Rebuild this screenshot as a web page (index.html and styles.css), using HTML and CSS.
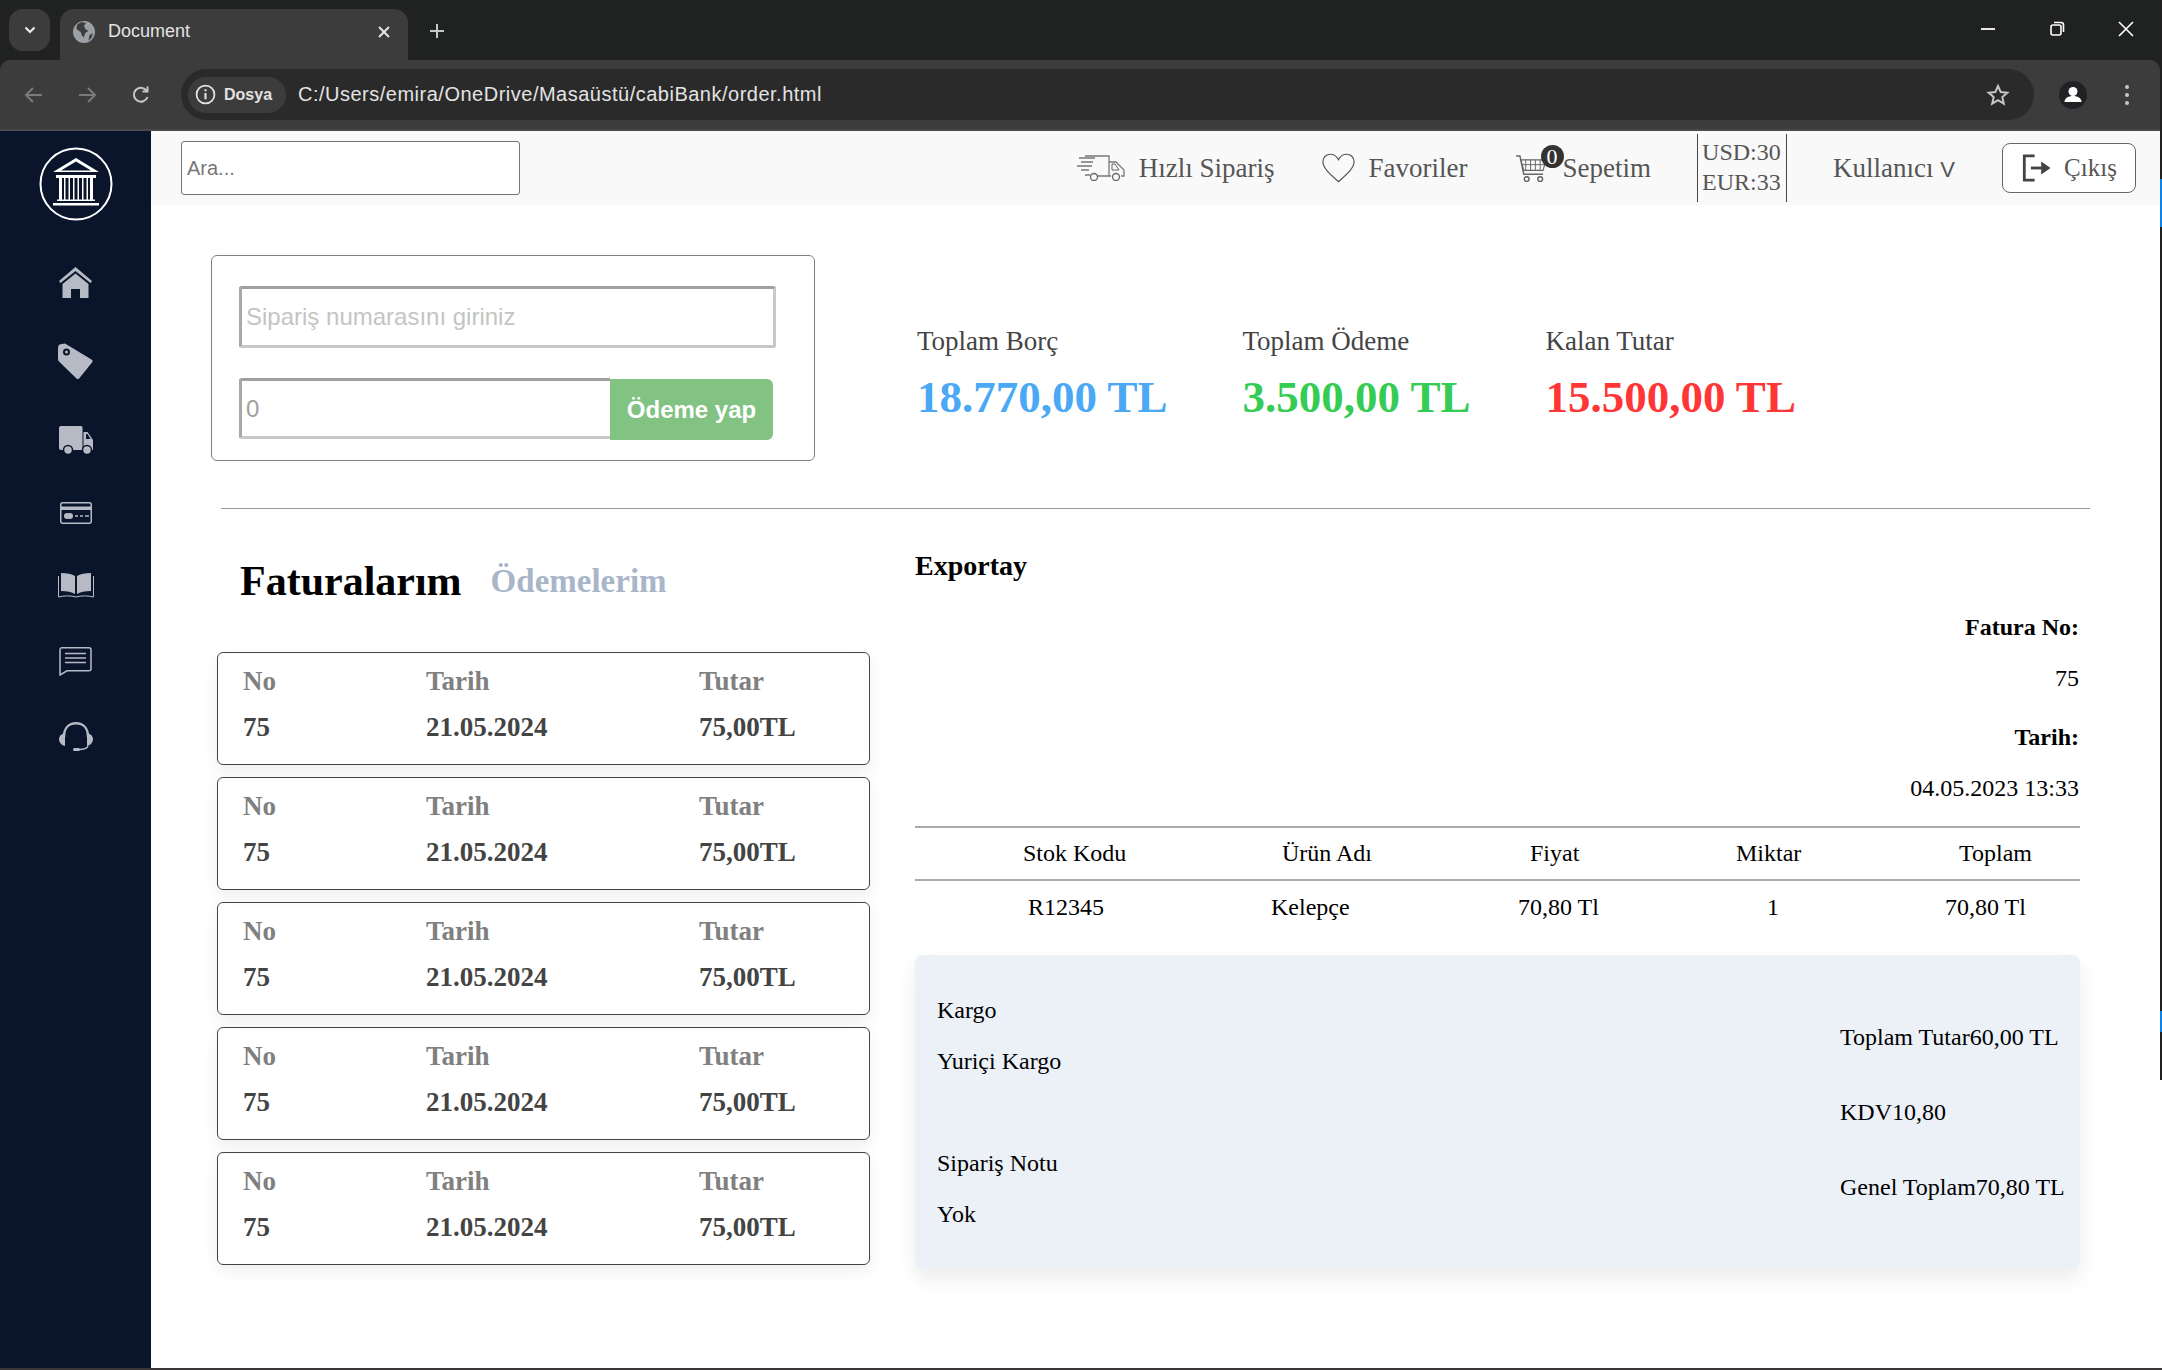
FILE: index.html
```html
<!DOCTYPE html>
<html lang="en">
<head>
  <meta charset="UTF-8" />
  <title>Document</title>
  <link rel="stylesheet" href="styles.css">
</head>
<body>

<div class="browser">
  <div class="tabstrip">
    <span class="tab-list"><svg width="14" height="9" viewBox="0 0 14 9"><path d="M2.500 1.500 7 6 11.500 1.500" fill="none" stroke="#e8eaed" stroke-width="2.200"/></svg></span>
    <div class="tab">
      <svg class="globe" width="22" height="22" viewBox="0 0 20 20"><circle cx="10" cy="10" r="10" fill="#9aa0a6"/><path d="M8 1 4 3 3 7l4 3 1 3 2 2 1-4 3-2-3-2-1-3 2-2z" fill="#3c3c3c"/><path d="M15 13l3-2-1 4-3 3z" fill="#3c3c3c"/></svg>
      <span class="tab-title">Document</span>
      <svg class="tab-close" width="14" height="14" viewBox="0 0 14 14"><path d="M2 2 12 12M12 2 2 12" stroke="#e8eaed" stroke-width="1.800"/></svg>
    </div>
    <svg class="new-tab" width="16" height="16" viewBox="0 0 16 16"><path d="M8 1v14M1 8h14" stroke="#c4c7c5" stroke-width="2"/></svg>
    <div class="win-controls">
      <svg width="16" height="16" viewBox="0 0 16 16"><path d="M1 8h14" stroke="#fff" stroke-width="1.800"/></svg>
      <svg width="16" height="16" viewBox="0 0 16 16"><rect x="2" y="4" width="10" height="10" rx="2" fill="none" stroke="#fff" stroke-width="1.600"/><path d="M5 1.500h7a2.500 2.500 0 0 1 2.500 2.500v7" fill="none" stroke="#fff" stroke-width="1.600"/></svg>
      <svg width="16" height="16" viewBox="0 0 16 16"><path d="M1 1 15 15M15 1 1 15" stroke="#fff" stroke-width="1.600"/></svg>
    </div>
  </div>
  <div class="toolbar">
    <svg class="nav-icon" width="20" height="20" viewBox="0 0 20 20"><path d="M18 10H3M9 3l-7 7 7 7" fill="none" stroke="#787a7b" stroke-width="2"/></svg>
    <svg class="nav-icon" width="20" height="20" viewBox="0 0 20 20"><path d="M2 10h15M11 3l7 7-7 7" fill="none" stroke="#787a7b" stroke-width="2"/></svg>
    <svg class="nav-icon" width="20" height="20" viewBox="0 0 20 20"><path d="M16.500 12a7 7 0 1 1-1-6.500M16.500 1.500v5h-5" fill="none" stroke="#c4c7c5" stroke-width="2"/></svg>
    <div class="omnibox">
      <span class="site-chip">
        <svg width="21" height="21" viewBox="0 0 20 20"><circle cx="10" cy="10" r="8.500" fill="none" stroke="#e3e3e3" stroke-width="1.700"/><path d="M10 8.500v6M10 5v2" stroke="#e3e3e3" stroke-width="2"/></svg>
        Dosya
      </span>
      <span class="url">C:/Users/emira/OneDrive/Masaüstü/cabiBank/order.html</span>
      <svg class="star" width="24" height="24" viewBox="0 0 24 24"><path d="M12 3l2.700 6.100 6.600.6-5 4.400 1.500 6.500-5.800-3.400-5.800 3.400 1.500-6.500-5-4.400 6.600-.6z" fill="none" stroke="#c4c7c5" stroke-width="2"/></svg>
    </div>
    <span class="avatar"><svg width="28" height="28" viewBox="0 0 28 28"><circle cx="14" cy="14" r="14" fill="#202124"/><circle cx="14" cy="10.500" r="4.500" fill="#fff"/><path d="M5.500 21c0-4 4-6 8.500-6s8.500 2 8.500 6z" fill="#fff"/></svg></span>
    <svg class="menu-dots" width="6" height="22" viewBox="0 0 6 22"><circle cx="3" cy="3" r="2" fill="#c4c7c5"/><circle cx="3" cy="11" r="2" fill="#c4c7c5"/><circle cx="3" cy="19" r="2" fill="#c4c7c5"/></svg>
  </div>
</div>

<div class="app">
  <aside class="sidebar">
    <svg class="logo" width="74" height="74" viewBox="0 0 74 74">
      <circle cx="37" cy="37" r="35.500" fill="none" stroke="#fff" stroke-width="2"/>
      <path d="M37 11 14 25h46z M37 14.500 22 23.500h30z" fill="#fff" fill-rule="evenodd"/>
      <path d="M17 28h40v3H17zM18 52.500h38v1.500H18zM14 56h46v2.500H14z" fill="#fff"/>
      <path d="M20 31h3v22h-3zM25 31h1.500v22H25zM29.500 31H31v22h-1.500zM34 31h1.500v22H34zM38.500 31H40v22h-1.500zM43 31h1.500v22H43zM47.500 31H49v22h-1.500zM51 31h3v22h-3z" fill="#fff"/>
    </svg>
    <nav class="side-nav">
      <a><svg width="33" height="31" viewBox="0 0 33 31"><path d="M16.500 0 33 14l-1.500 2L16.500 4 1.500 16 0 14z" fill="#b6bac5"/><path d="M16.500 6.500 29.500 17v14H21v-9h-9v9H3.500V17z" fill="#b6bac5"/></svg></a>
      <a><svg width="35" height="36" viewBox="0 0 35 36"><path d="M7 .5 33.500 16.500a2 2 0 0 1 .5 3L21.500 35a2 2 0 0 1-3 .5L1.500 19A4 4 0 0 1 0 16V5a4 4 0 0 1 4-4z" fill="#b6bac5"/><circle cx="8.500" cy="9" r="3.500" fill="#0a142b"/><circle cx="8.500" cy="9" r="1.500" fill="#b6bac5"/></svg></a>
      <a><svg width="34" height="29" viewBox="0 0 34 29"><path d="M2 0h20a1.500 1.500 0 0 1 1.500 1.500V24H2a2 2 0 0 1-2-2V2a2 2 0 0 1 2-2z" fill="#b6bac5"/><path d="M24.500 6h4l5.500 8v10H24.500z" fill="#b6bac5"/><path d="M27 8h1.500l3 5H27z" fill="#0a142b"/><circle cx="9" cy="24" r="4.500" fill="#b6bac5" stroke="#0a142b" stroke-width="1.500"/><circle cx="28" cy="24" r="4.500" fill="#b6bac5" stroke="#0a142b" stroke-width="1.500"/></svg></a>
      <a><svg width="32" height="22" viewBox="0 0 32 22"><rect x=".75" y=".75" width="30.500" height="20.500" rx="2" fill="none" stroke="#b6bac5" stroke-width="1.500"/><path d="M1 4.500h30V8H1z" fill="#b6bac5"/><circle cx="7" cy="14" r="3" fill="#b6bac5"/><circle cx="10" cy="14" r="3" fill="#b6bac5"/><path d="M15 14h3M20 14h3M25 14h4" stroke="#b6bac5" stroke-width="1.500"/></svg></a>
      <a><svg width="36" height="25" viewBox="0 0 36 25"><path d="M3 0c6 0 11 1 14 3v18c-3-2-8-3-14-3z" fill="#b6bac5"/><path d="M33 0c-6 0-11 1-14 3v18c3-2 8-3 14-3z" fill="#b6bac5"/><path d="M.5 3v21c6-1.500 12-1.500 17.500 0 5.500-1.500 11.500-1.500 17.500 0V3" fill="none" stroke="#b6bac5"/></svg></a>
      <a><svg width="33" height="29" viewBox="0 0 33 29"><path d="M3 .75h27a2 2 0 0 1 2 2v19a2 2 0 0 1-2 2H8L1 28V2.750a2 2 0 0 1 2-2z" fill="none" stroke="#b6bac5" stroke-width="1.500"/><path d="M6 6.500h21M6 11h21M6 15.500h21" stroke="#b6bac5" stroke-width="1.500"/></svg></a>
      <a><svg width="34" height="29" viewBox="0 0 34 29"><path d="M5 15C5 6 10 1.300 17 1.300S29 6 29 15" fill="none" stroke="#b6bac5" stroke-width="2.500"/><path d="M6 11C2 12 0 14 0 17s2 6 6 7zM28 11c4 1 6 3 6 6s-2 6-6 7z" fill="#b6bac5"/><path d="M29 24c-1 2.500-4 3.500-9 3.500" fill="none" stroke="#b6bac5" stroke-width="1.500"/><rect x="14" y="26" width="7" height="3" rx="1.500" fill="#b6bac5"/></svg></a>
    </nav>
  </aside>

  <div class="main">
    <header class="topbar">
      <input class="search" type="text" placeholder="Ara...">
      <div class="top-links">
        <a class="top-link fast">
          <svg width="48" height="26" viewBox="0 0 48 26"><path d="M8 1h24v20H20M32 7h7l8 8v6h-3M32 21h2" fill="none" stroke="#777" stroke-width="1.300"/><path d="M35 9h3l4 6h-7z" fill="none" stroke="#666"/><circle cx="17" cy="22" r="3.500" fill="none" stroke="#666" stroke-width="1.300"/><circle cx="39" cy="22" r="3.500" fill="none" stroke="#666" stroke-width="1.300"/><path d="M2 3h16M4 7h12M0 11h15M4 15h8M8 20h5" stroke="#777" stroke-width="1.300"/></svg>
          Hızlı Sipariş
        </a>
        <a class="top-link fav">
          <svg width="33" height="30" viewBox="0 0 36 32"><path d="M18 31C8 22 1 16 1 9c0-5 4-8 8-8 4 0 7 2 9 6 2-4 5-6 9-6 4 0 8 3 8 8 0 7-7 13-17 22z" fill="none" stroke="#555" stroke-width="1.300"/></svg>
          Favoriler
        </a>
        <a class="top-link cart">
          <svg width="31" height="27" viewBox="0 0 32 28"><path d="M0 1h4l4 19h20" fill="none" stroke="#666" stroke-width="1.500"/><path d="M5 5h26l-3 11H8z" fill="none" stroke="#666" stroke-width="1.200"/><path d="M10 5v11M15 5v11M20 5v11M25 5v11M6 10h24" stroke="#666"/><circle cx="11" cy="25" r="2.500" fill="none" stroke="#666" stroke-width="1.500"/><circle cx="25" cy="25" r="2.500" fill="none" stroke="#666" stroke-width="1.500"/></svg>
          <span class="cart-badge">0</span>
          Sepetim
        </a>
        <div class="rates"><span>USD:30</span><span>EUR:33</span></div>
        <a class="user">Kullanıcı <small>V</small></a>
        <button class="logout" type="button">
          <svg width="31" height="30" viewBox="0 0 32 32"><path d="M14 3H3v26h11" fill="none" stroke="#444" stroke-width="3"/><path d="M10 16h14" stroke="#444" stroke-width="3"/><path d="M21 9l10 7-10 7z" fill="#444"/></svg>
          Çıkış
        </button>
      </div>
    </header>

    <section class="pay-row">
      <form class="pay-box">
        <input class="field" type="text" placeholder="Sipariş numarasını giriniz">
        <div class="pay-line">
          <input class="field amount" type="text" placeholder="0">
          <button class="pay-btn" type="button">Ödeme yap</button>
        </div>
      </form>
      <div class="stats">
        <div class="stat"><span>Toplam Borç</span><strong class="blue">18.770,00 TL</strong></div>
        <div class="stat"><span>Toplam Ödeme</span><strong class="green">3.500,00 TL</strong></div>
        <div class="stat"><span>Kalan Tutar</span><strong class="red">15.500,00 TL</strong></div>
      </div>
    </section>

    <hr class="divider">

    <section class="content">
      <div class="left-col">
        <div class="tabs"><h1>Faturalarım</h1><h2>Ödemelerim</h2></div>
        <div class="invoice-list" id="invoices"></div>
      </div>
      <div class="right-col">
        <h3>Exportay</h3>
        <div class="meta">
          <b>Fatura No:</b>
          <span>75</span>
          <b>Tarih:</b>
          <span>04.05.2023 13:33</span>
        </div>
        <div class="items-head"><span>Stok Kodu</span><span>Ürün Adı</span><span>Fiyat</span><span>Miktar</span><span>Toplam</span></div>
        <div class="items-row"><span>R12345</span><span>Kelepçe</span><span>70,80 Tl</span><span>1</span><span>70,80 Tl</span></div>
        <div class="summary">
          <div class="summary-left">
            <p>Kargo</p>
            <p>Yuriçi Kargo</p>
            <p class="note">Sipariş Notu</p>
            <p>Yok</p>
          </div>
          <div class="summary-right">
            <p>Toplam Tutar60,00 TL</p>
            <p>KDV10,80</p>
            <p>Genel Toplam70,80 TL</p>
          </div>
        </div>
      </div>
    </section>
  </div>
</div>

<div class="window-edge"></div>

<script>
  const list = document.getElementById('invoices');
  for (let i = 0; i < 5; i++) {
    list.innerHTML += `
      <div class="invoice">
        <div class="inv-col no"><span>No</span><b>75</b></div>
        <div class="inv-col date"><span>Tarih</span><b>21.05.2024</b></div>
        <div class="inv-col total"><span>Tutar</span><b>75,00TL</b></div>
      </div>`;
  }
</script>

</body>
</html>
```

FILE: styles.css
```css
* {
  box-sizing: border-box;
}

body {
  margin: 0;
  height: 1370px;
  overflow: hidden;
  position: relative;
  font-family: "Liberation Serif", "Times New Roman", serif;
  background: #fff;
  border-bottom: 2px solid #3a3536;
}

/* browser chrome */
.browser {
  height: 131px;
  background: #202221;
  font-family: "Liberation Sans", Arial, sans-serif;
}

.tabstrip {
  height: 60px;
  display: flex;
  align-items: flex-start;
  padding: 9px 0 0 9px;
}

.tab-list {
  width: 41px;
  height: 42px;
  background: #3c3c3c;
  border-radius: 14px;
  display: flex;
  align-items: center;
  justify-content: center;
}

.tab {
  width: 348px;
  height: 51px;
  margin-left: 10px;
  padding: 0 17px 6px 13px;
  background: #3c3c3c;
  border-radius: 14px 14px 0 0;
  display: flex;
  align-items: center;
}

.tab-title {
  margin-left: 13px;
  flex: 1;
  font-size: 18px;
  color: #e3e3e3;
}

.new-tab {
  margin: 14px 0 0 21px;
}

.win-controls {
  margin-left: auto;
  padding: 12px 28px 0 0;
  display: flex;
  gap: 53px;
}

.toolbar {
  height: 71px;
  margin-right: 2px;
  background: #3c3c3c;
  border-bottom: 2px solid #4a4a4a;
  border-radius: 10px 10px 0 0;
  display: flex;
  align-items: center;
  padding: 0 30px 0 24px;
}

.nav-icon {
  margin-right: 33px;
  flex: none;
}

.nav-icon:nth-child(2) {
  margin-right: 34px;
}

.nav-icon:nth-child(3) {
  margin-right: 30px;
}

.omnibox {
  flex: 1;
  height: 51px;
  border-radius: 26px;
  background: #2a2a2a;
  display: flex;
  align-items: center;
  padding: 0 24px 0 7px;
}

.site-chip {
  width: 98px;
  height: 36px;
  padding-left: 7px;
  border-radius: 18px;
  background: #3c3c3c;
  display: flex;
  align-items: center;
  gap: 8px;
  font-size: 16px;
  font-weight: 700;
  color: #e3e3e3;
}

.url {
  margin-left: 12px;
  font-size: 20px;
  letter-spacing: 0.5px;
  color: #e3e3e3;
}

.star {
  margin-left: auto;
}

.avatar {
  margin: 0 37px 0 25px;
  height: 28px;
}

/* thin window border on the right */
.window-edge {
  position: absolute;
  top: 0;
  right: 0;
  width: 2px;
  height: 1080px;
  background: linear-gradient(to bottom,
    #202020 179px, #0a84e8 179px, #0a84e8 227px,
    #202020 227px, #202020 1011px, #0a84e8 1011px,
    #0a84e8 1032px, #202020 1032px);
}

/* app shell */
.app {
  display: flex;
  height: 1237px;
  padding-right: 2px;
}

.sidebar {
  width: 151px;
  flex: none;
  background: #0a142b;
  padding-top: 16px;
  display: flex;
  flex-direction: column;
  align-items: center;
}

.logo {
  flex: none;
}

.side-nav {
  margin-top: 46px;
  display: flex;
  flex-direction: column;
  align-items: center;
  gap: 47px;
}

.side-nav a {
  display: flex;
}

/* the icons are not evenly spaced in the original */
.side-nav a:nth-child(2) { margin-top: -2px; }
.side-nav a:nth-child(5) { margin-top: 2px; }
.side-nav a:nth-child(6) { margin-top: 2px; }
.side-nav a:nth-child(7) { margin-top: -1px; }

.main {
  flex: 1;
  min-width: 0;
}

.topbar {
  height: 74px;
  background: #f9f9f9;
  display: flex;
  align-items: center;
  padding: 0 24px 0 30px;
}

.search {
  width: 339px;
  height: 54px;
  padding: 0 5px;
  border: 1.500px solid #767676;
  border-radius: 3px;
  font-size: 20px;
  font-family: "Liberation Sans", Arial, sans-serif;
}

.search::placeholder {
  color: #777;
}

.top-links {
  margin-left: auto;
  display: flex;
  align-items: center;
  font-size: 27px;
  color: #555;
}

.top-link {
  display: flex;
  align-items: center;
}

.fast svg {
  margin-right: 14px;
}

.fast {
  margin-right: 47px;
}

.fav svg {
  margin-right: 14px;
}

.fav {
  margin-right: 48px;
}

.cart {
  position: relative;
  margin-right: 46px;
}

.cart svg {
  margin-right: 16px;
}

.cart-badge {
  position: absolute;
  left: 25px;
  top: -8px;
  width: 23px;
  height: 23px;
  background: #333;
  border-radius: 50%;
  color: #fff;
  font-size: 22px;
  line-height: 23px;
  text-align: center;
}

.rates {
  height: 68px;
  width: 90px;
  padding: 0 0 2px 4px;
  border-left: 1px solid #444;
  border-right: 1px solid #444;
  display: flex;
  flex-direction: column;
  justify-content: center;
  font-size: 24px;
  line-height: 30px;
}

.user {
  margin-left: 46px;
  white-space: nowrap;
}

.user small {
  font: 22px "Liberation Sans", Arial, sans-serif;
}

.logout {
  margin-left: 47px;
  width: 134px;
  height: 50px;
  background: #fff;
  border: 1.500px solid #666;
  border-radius: 8px;
  display: flex;
  align-items: center;
  justify-content: center;
  gap: 12px;
  font: inherit;
  font-size: 25px;
  color: #555;
}

/* payment + totals */
.pay-row {
  display: flex;
  padding: 50px 0 0 60px;
}

.pay-box {
  width: 604px;
  height: 206px;
  border: 1px solid #808080;
  border-radius: 6px;
  padding: 30px 27px;
  font-family: "Liberation Sans", Arial, sans-serif;
}

.field {
  display: block;
  width: 537px;
  height: 62px;
  padding: 0 4px;
  border: 3px solid;
  border-color: #a0a0a0 #c8c8c8 #c8c8c8 #a8a8a8;
  border-radius: 3px;
  font-size: 24px;
  font-family: inherit;
}

.field::placeholder {
  color: #c4c4c4;
}

.pay-line {
  margin-top: 30px;
  display: flex;
  align-items: flex-start;
}

.amount {
  width: 371px;
  height: 61px;
  border-right: 0;
  border-radius: 3px 0 0 3px;
}

.amount::placeholder {
  color: #a0a0a0;
}

.pay-btn {
  width: 163px;
  height: 61px;
  margin-top: 1px;
  border: 0;
  border-radius: 0 6px 6px 0;
  background: #82c282;
  color: #fff;
  font: 700 24px "Liberation Sans", Arial, sans-serif;
}

.stats {
  margin-left: 102px;
  padding-top: 71px;
  display: flex;
}

.stat {
  display: flex;
  flex-direction: column;
  margin-right: 75px;
}

.stat span {
  font-size: 27px;
  line-height: 30px;
  color: #444;
}

.stat strong {
  margin-top: 14px;
  font-size: 45px;
  line-height: 54px;
  white-space: nowrap;
}

.blue { color: #4aa8f5; }
.green { color: #35cc55; }
.red { color: #ff3636; }

.divider {
  margin: 47px 70px 0 70px;
  border: 0;
  border-top: 1.500px solid #999;
}

/* invoices and detail */
.content {
  display: flex;
  padding-left: 66px;
}

.left-col {
  width: 653px;
  flex: none;
}

.tabs {
  height: 143px;
  padding: 48px 0 0 23px;
  display: flex;
  align-items: flex-start;
  gap: 29px;
}

.tabs h1 {
  margin: 0;
  font-size: 42px;
  color: #000;
}

.tabs h2 {
  margin: 6px 0 0;
  font-size: 33px;
  color: #a9b5c9;
}

.invoice-list {
  display: flex;
  flex-direction: column;
  gap: 12px;
}

.invoice {
  height: 113px;
  border: 1.500px solid #444;
  border-radius: 6px;
  box-shadow: 0 6px 16px rgba(0, 0, 0, 0.07);
  padding: 13px 0 0 25px;
  display: flex;
  font-size: 27px;
}

.inv-col {
  display: flex;
  flex-direction: column;
  gap: 15px;
  line-height: 31px;
}

.inv-col span {
  font-weight: 700;
  color: #808080;
}

.inv-col b {
  color: #444;
}

.no { width: 183px; }
.date { width: 273px; }

.right-col {
  margin-left: 45px;
  width: 1165px;
  flex: none;
  color: #000;
}

.right-col h3 {
  margin: 41px 0 0;
  font-size: 28px;
  line-height: 32px;
}

.meta {
  margin-top: 31px;
  padding-right: 1px;
  display: flex;
  flex-direction: column;
  align-items: flex-end;
  font-size: 24px;
  line-height: 28px;
}

.meta span {
  margin: 23px 0 31px;
}

.meta span:last-child {
  margin-bottom: 0;
}

/* header and body cells do not share column lines */
.items-head,
.items-row {
  display: grid;
  align-items: center;
  font-size: 24px;
}

.items-head {
  margin-top: 24px;
  height: 55px;
  padding-left: 108px;
  grid-template-columns: 259px 248px 206px 223px 1fr;
  border-top: 2px solid #aaa;
  border-bottom: 2px solid #aaa;
}

.items-row {
  height: 52px;
  padding-left: 113px;
  grid-template-columns: 243px 247px 249px 178px 1fr;
}

.summary {
  margin-top: 22px;
  height: 314px;
  border-radius: 8px;
  background: #ecf1f8;
  box-shadow: 0 10px 20px rgba(0, 0, 0, 0.08);
  padding: 41px 15px 0 22px;
  display: flex;
  justify-content: space-between;
  font-size: 24px;
  line-height: 28px;
}

.summary p {
  margin: 0 0 23px;
}

.summary-left .note {
  margin-top: 74px;
}

.summary-right {
  padding-top: 27px;
  width: 225px;
}

.summary-right p {
  margin-bottom: 47px;
  white-space: nowrap;
}
```
